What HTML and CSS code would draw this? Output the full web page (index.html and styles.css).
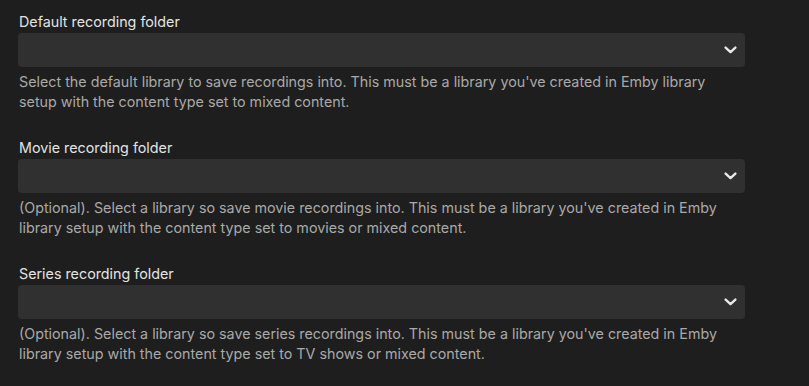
FILE: index.html
```html
<!DOCTYPE html>
<html lang="en">

<head>
    <meta charset="UTF-8">
    <meta name="viewport" content="width=device-width, initial-scale=1.0">
    <title>Recording folders</title>
    <link rel="stylesheet" href="styles.css">
</head>

<body>
    <div class="settings">
        <!-- Default folder -->
        <div class="field">
            <label class="field-label" for="defaultFolder">Default recording folder</label>
            <div class="select-wrap">
                <select id="defaultFolder" class="select"></select>
                <svg class="chevron" viewBox="0 0 12 7"><path d="M1.5 1.2 6 5.4l4.5-4.2"/></svg>
            </div>
            <div class="field-desc">Select the default library to save recordings into. This must be a library you've created in Emby library setup with the content type set to mixed content.</div>
        </div>

        <!-- Movie folder -->
        <div class="field">
            <label class="field-label" for="movieFolder">Movie recording folder</label>
            <div class="select-wrap">
                <select id="movieFolder" class="select"></select>
                <svg class="chevron" viewBox="0 0 12 7"><path d="M1.5 1.2 6 5.4l4.5-4.2"/></svg>
            </div>
            <div class="field-desc">(Optional). Select a library so save movie recordings into. This must be a library you've created in Emby library setup with the content type set to movies or mixed content.</div>
        </div>

        <!-- Series folder -->
        <div class="field">
            <label class="field-label" for="seriesFolder">Series recording folder</label>
            <div class="select-wrap">
                <select id="seriesFolder" class="select"></select>
                <svg class="chevron" viewBox="0 0 12 7"><path d="M1.5 1.2 6 5.4l4.5-4.2"/></svg>
            </div>
            <div class="field-desc">(Optional). Select a library so save series recordings into. This must be a library you've created in Emby library setup with the content type set to TV shows or mixed content.</div>
        </div>
    </div>
</body>

</html>
```

FILE: styles.css
```css
* {
    margin: 0;
    padding: 0;
    box-sizing: border-box;
}

body {
    font-family: 'Inter', 'Noto Sans', sans-serif;
    background-color: #1e1e1e;
    color: #e6e6e6;
    overflow: hidden;
}

.settings {
    padding: 12px 64px 0 18px;
    display: flex;
    flex-direction: column;
    gap: 26px;
}

.field-label {
    display: block;
    font-size: 14.3px;
    line-height: 20px;
    margin-bottom: 1px;
    padding-left: 1px;
    color: #e3e3e3;
}

.select-wrap {
    position: relative;
    height: 34px;
}

.select {
    width: 100%;
    height: 100%;
    appearance: none;
    -webkit-appearance: none;
    background-color: #303030;
    border: none;
    border-radius: 4px;
    color: #e6e6e6;
    outline: none;
}

.chevron {
    position: absolute;
    top: 13px;
    right: 8px;
    width: 13px;
    height: 8px;
    fill: none;
    stroke: #e8e8e8;
    stroke-width: 2.2;
    stroke-linecap: round;
    stroke-linejoin: round;
    pointer-events: none;
}

.field-desc {
    margin-top: 5px;
    padding-left: 1px;
    font-size: 14.3px;
    line-height: 20px;
    color: #a9a9a9;
}
```
